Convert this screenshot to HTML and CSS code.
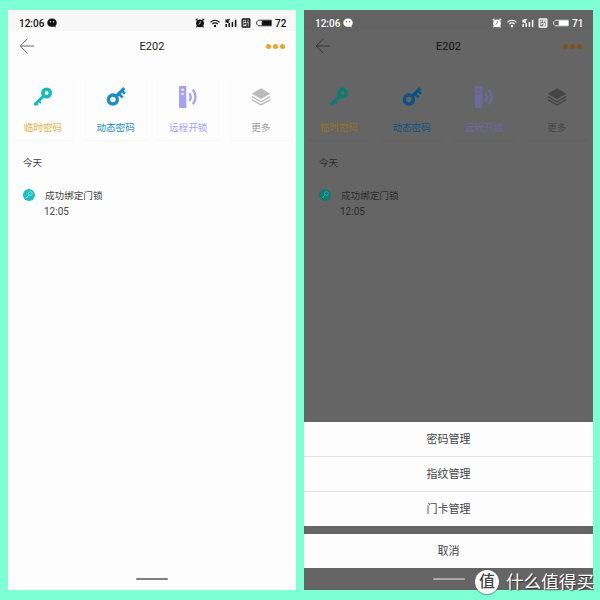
FILE: index.html
```
<!DOCTYPE html>
<html lang="zh-CN">

<head>
  <meta charset="UTF-8">
  <title>E202</title>
  <link rel="stylesheet" href="styles.css">
</head>

<body>
  <svg class="sprite">
    <symbol id="chat" viewBox="0 0 10 10">
      <path fill="currentColor" d="M5 .6C2.300.6.3 2.300.3 4.700c0 1.700 1 3.200 2.700 3.800.7.300 3 .3 4 0l1.700 1-.3-1.800c.8-.7 1.300-1.700 1.300-3C9.700 2.300 7.700.6 5 .6z" />
      <circle class="eye" cx="3.400" cy="3.700" r=".7" />
      <circle class="eye" cx="6.500" cy="3.700" r=".7" />
    </symbol>
    <symbol id="alarm" viewBox="0 0 10 10">
      <circle cx="5" cy="5.300" r="3.900" fill="currentColor" />
      <path d="M.8 2.200L2.500.8M9.200 2.200L7.500.8M2.400 8.200L1.500 9.300M7.600 8.200l.9 1.100" stroke="currentColor" stroke-width="1.300" />
      <path class="hand" d="M5.400 3.300L5 5.500 3.500 6.300" />
    </symbol>
    <symbol id="wifi" viewBox="0 0 10 10">
      <path d="M.5 4.200Q5 .3 9.500 4.200M2.200 6.100Q5 3.700 7.800 6.100" fill="none" stroke="currentColor" stroke-width="1.200" />
      <circle cx="5" cy="8" r="1.200" fill="currentColor" />
    </symbol>
    <symbol id="signal" viewBox="0 0 12 10">
      <path d="M1.200 1.500v2.300h2M3 1v4M5 1.500h-.8M1.200 6v3M4.200 5v4M7.400 4v5M10.600 1.800V9" fill="none" stroke="currentColor" stroke-width="1.500" />
    </symbol>
    <symbol id="volte" viewBox="0 0 10 10">
      <rect x="1.200" y="1" width="7.600" height="8" rx=".6" fill="none" stroke="currentColor" stroke-width="1.300" />
      <path d="M3 4.600V3h1.500M5.500 4.500V2.800h1.700v1.700M3 7.300V5.800h4v1.500H5" fill="none" stroke="currentColor" stroke-width="1.100" />
    </symbol>
    <symbol id="battery" viewBox="0 0 16 8">
      <path d="M2.800 1.200h12.400v5.600H2.800C1.800 6.800 1.700 5.500.7 5.200V2.800C1.700 2.500 1.800 1.200 2.800 1.200z" fill="none" stroke="currentColor" stroke-width=".8" />
      <path d="M5.700 1.500h9.500v5H5.700z" fill="currentColor" />
    </symbol>
    <symbol id="back" viewBox="0 0 16 16">
      <path d="M8.500.7L1.200 8l7.300 7.300M1.200 8H15" fill="none" stroke="currentColor" stroke-width=".8" />
    </symbol>
    <symbol id="key" viewBox="0 0 20 20">
      <circle cx="13.600" cy="6" r="3.700" fill="none" stroke="currentColor" stroke-width="3.600" />
      <path d="M10.800 8.900L1.400 18" stroke="currentColor" stroke-width="3" />
      <path d="M5.600 13.700l2.400 2.400M3 16.300l1.900 1.900" stroke="currentColor" stroke-width="1.800" />
    </symbol>
    <symbol id="key-up" viewBox="0 0 20 20">
      <circle cx="6.900" cy="12.600" r="4.500" fill="none" stroke="currentColor" stroke-width="3.500" />
      <path d="M10 9.500l8.300-8.300" stroke="currentColor" stroke-width="3.200" />
      <path d="M12.400 6.600l4.400 3.800M15.400 3.400l3.600 3.400" stroke="currentColor" stroke-width="2.600" />
    </symbol>
    <symbol id="remote" viewBox="0 0 20 22">
      <path fill="currentColor" fill-rule="evenodd" d="M1.800 0h5.700q.8 0 .8.800v20.400q0 .8-.8.800H1.800q-.8 0-.8-.8V.8Q1 0 1.800 0zM3.400 2.700v2.100h2.300V2.700zM3.400 7v1.800h2.300V7z" />
      <path d="M11.300 7.200q2.900 3.800 0 7.800M14.900 3.700q5.200 7.300 0 14.600" fill="none" stroke="currentColor" stroke-width="2.300" />
    </symbol>
    <symbol id="layers" viewBox="0 0 22 20">
      <path d="M11 .5l10.200 5.800L11 12.100.8 6.300z" fill="currentColor" />
      <path d="M.9 9.500L11 15.300l10.100-5.800M.9 12.900L11 18.700l10.100-5.800" fill="none" stroke="currentColor" stroke-width="1.500" />
    </symbol>
    <symbol id="key-badge" viewBox="0 0 12 12">
      <circle cx="6" cy="6" r="6" fill="currentColor" />
      <circle class="badge-key" cx="7.400" cy="4.500" r="1.900" />
      <path class="badge-key" d="M6 6L2.700 9.300M4.200 8l.8.800" />
    </symbol>
  </svg>

  <div class="phone">
    <div class="status-bar">
      <span class="time">12:06</span>
      <svg class="chat"><use href="#chat" /></svg>
      <div class="status-icons">
        <svg class="small"><use href="#alarm" /></svg>
        <svg class="small"><use href="#wifi" /></svg>
        <svg class="signal"><use href="#signal" /></svg>
        <svg class="small"><use href="#volte" /></svg>
        <svg class="battery"><use href="#battery" /></svg>
        <span class="percent">72</span>
      </div>
    </div>
    <div class="header">
      <svg class="back"><use href="#back" /></svg>
      <span class="title">E202</span>
      <div class="dots"><i></i><i></i><i></i></div>
    </div>
    <div class="menu">
      <div class="card temp"><svg><use href="#key" /></svg><span>临时密码</span></div>
      <div class="card dynamic"><svg><use href="#key-up" /></svg><span>动态密码</span></div>
      <div class="card remote"><svg><use href="#remote" /></svg><span>远程开锁</span></div>
      <div class="card more"><svg><use href="#layers" /></svg><span>更多</span></div>
    </div>
    <div class="day">今天</div>
    <div class="record">
      <svg><use href="#key-badge" /></svg>
      <div>
        <p class="event">成功绑定门锁</p>
        <p class="event-time">12:05</p>
      </div>
    </div>
    <div class="home-bar"></div>
  </div>

  <div class="phone dimmed">
    <div class="status-bar">
      <span class="time">12:06</span>
      <svg class="chat"><use href="#chat" /></svg>
      <div class="status-icons">
        <svg class="small"><use href="#alarm" /></svg>
        <svg class="small"><use href="#wifi" /></svg>
        <svg class="signal"><use href="#signal" /></svg>
        <svg class="small"><use href="#volte" /></svg>
        <svg class="battery"><use href="#battery" /></svg>
        <span class="percent">71</span>
      </div>
    </div>
    <div class="header">
      <svg class="back"><use href="#back" /></svg>
      <span class="title">E202</span>
      <div class="dots"><i></i><i></i><i></i></div>
    </div>
    <div class="menu">
      <div class="card temp"><svg><use href="#key" /></svg><span>临时密码</span></div>
      <div class="card dynamic"><svg><use href="#key-up" /></svg><span>动态密码</span></div>
      <div class="card remote"><svg><use href="#remote" /></svg><span>远程开锁</span></div>
      <div class="card more"><svg><use href="#layers" /></svg><span>更多</span></div>
    </div>
    <div class="day">今天</div>
    <div class="record">
      <svg><use href="#key-badge" /></svg>
      <div>
        <p class="event">成功绑定门锁</p>
        <p class="event-time">12:05</p>
      </div>
    </div>
    <div class="sheet">
      <div class="option">密码管理</div>
      <div class="option">指纹管理</div>
      <div class="option">门卡管理</div>
      <div class="option cancel">取消</div>
    </div>
    <div class="home-bar"></div>
  </div>

  <div class="watermark">
    <span class="logo">值</span>
    <span class="brand">什么值得买</span>
  </div>
</body>

</html>
```
FILE: styles.css
```
* {
  box-sizing: border-box;
}

body {
  display: flex;
  gap: 8px;
  width: 600px;
  height: 600px;
  margin: 0;
  padding: 10px 7px 10px 8px;
  overflow: hidden;
  background-color: #7fffd4;
  font-family: Roboto, "Noto Sans CJK SC", sans-serif;
}

p {
  margin: 0;
}

.sprite {
  position: absolute;
  width: 0;
  height: 0;
}

.phone {
  --bar: #f7f7f7;
  --badge: #9ce6e4;
  display: flex;
  flex-direction: column;
  width: 288px;
  height: 580px;
  background-color: #fdfdfd;
  color: #444;
}

/* status bar */
.status-bar {
  display: flex;
  align-items: center;
  height: 21px;
  padding: 5px 10px 0 11px;
  background-color: var(--bar);
  color: #111;
}

.time {
  width: 28px;
  font-size: 10px;
  font-weight: 500;
}

.chat {
  width: 10px;
  height: 10px;
}

.eye {
  fill: var(--bar);
}

.hand {
  fill: none;
  stroke: var(--bar);
  stroke-width: 0.8;
}

.status-icons {
  display: flex;
  align-items: center;
  margin-left: auto;
}

.small {
  width: 10px;
  height: 10px;
  margin-right: 5px;
}

.signal {
  width: 12px;
  height: 10px;
  margin-right: 4px;
}

.battery {
  width: 16px;
  height: 8px;
  margin-right: 3px;
}

.percent {
  width: 11px;
  font-size: 10px;
  font-weight: 500;
}

/* title row */
.header {
  display: flex;
  align-items: center;
  justify-content: space-between;
  height: 29px;
  padding: 0 11px;
}

.back {
  width: 16px;
  height: 16px;
  color: #444;
}

.title {
  padding: 1px 0 0 3px;
  font-size: 11px;
  color: #222;
}

.dots {
  display: flex;
  gap: 2px;
  padding-top: 1px;
}

.dots i {
  width: 5px;
  height: 5px;
  border-radius: 50%;
  background-color: #eba02f;
}

/* four shortcuts */
.menu {
  display: grid;
  grid-template-columns: repeat(4, 60px);
  column-gap: 12.6px;
  margin: 12px 0 0 5px;
}

.card {
  display: flex;
  flex-direction: column;
  align-items: center;
  height: 68px;
  padding-top: 14px;
  border-radius: 2px;
  box-shadow: 0 1px 2px rgba(0, 0, 0, 0.04);
  font-size: 9.6px;
  line-height: 14px;
}

.card svg {
  width: 20px;
  height: 22px;
  margin-bottom: 13px;
}

.temp svg {
  color: #17b9b9;
}

.temp span {
  color: #e3b04a;
}

.dynamic {
  color: #1b8dcb;
}

.remote {
  color: #a5a2f3;
}

.more {
  color: #999;
}

.more svg {
  color: #bbb;
}

/* history */
.day {
  margin: 16px 0 0 15px;
  font-size: 9.6px;
  line-height: 14px;
}

.record {
  display: flex;
  margin: 19px 0 0 15px;
}

.record svg {
  width: 12px;
  height: 12px;
  margin-right: 9px;
  color: #1fbfc0;
}

.badge-key {
  fill: none;
  stroke: var(--badge);
  stroke-width: 0.8;
}

.event {
  padding-left: 1px;
  font-size: 9.6px;
  line-height: 14px;
}

.event-time {
  margin-top: 1px;
  font-size: 10px;
  line-height: 15px;
}

.home-bar {
  width: 32px;
  height: 2px;
  margin: auto auto 10px;
  border-radius: 1px;
  background-color: #808080;
}

/* phone with the action sheet open */
.dimmed {
  --bar: #636363;
  --badge: #4fa39c;
  width: 289px;
  background-color: #656565;
  color: #2c2c2c;
}

.dimmed .status-bar {
  color: #fff;
}

.dimmed .back {
  color: #2a2a2a;
}

.dimmed .title {
  color: #111;
}

.dimmed .dots i {
  background-color: #7d5518;
}

.dimmed .temp svg {
  color: #0c7b72;
}

.dimmed .temp span {
  color: #94702f;
}

.dimmed .dynamic {
  color: #0d5283;
}

.dimmed .remote {
  color: #6c699f;
}

.dimmed .more,
.dimmed .more svg {
  color: #444;
}

.dimmed .record svg {
  color: #0c7b72;
}

.sheet {
  margin-top: auto;
}

.option {
  height: 35px;
  border-bottom: 1px solid #e2e2e2;
  background-color: #fdfdfd;
  color: #444;
  font-size: 11px;
  line-height: 36px;
  text-align: center;
}

.option:nth-child(3) {
  height: 34px;
  border-bottom: none;
}

.cancel {
  height: 34px;
  margin-top: 8px;
  border-bottom: none;
}

.dimmed .home-bar {
  margin-top: 10px;
  background-color: #aaa;
}

.watermark {
  position: absolute;
  left: 475px;
  top: 570px;
  display: flex;
  align-items: center;
  gap: 7px;
  color: #fff;
  white-space: nowrap;
}

.logo {
  width: 24px;
  height: 24px;
  border-radius: 50%;
  background-color: #fff;
  color: #444;
  font-size: 16px;
  font-weight: 500;
  line-height: 24px;
  text-align: center;
  box-shadow: 0 1px 1px rgba(0, 0, 0, 0.4);
}

.brand {
  font-size: 17.6px;
  line-height: 24px;
  text-shadow: 1px 1px 1px rgba(0, 0, 0, 0.5);
}
```
